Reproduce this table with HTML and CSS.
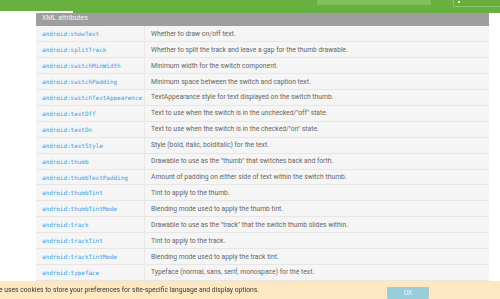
FILE: index.html
```html
<!DOCTYPE html>
<html>
<head>
<meta charset="utf-8">
<link rel="stylesheet" href="styles.css">
</head>
<body>
<header class="topbar">
  <div class="tab-underline"></div>
  <div class="search"></div>
  <div class="account"><span class="dot"></span></div>
</header>
<main class="content">
  <div class="attrs">
    <div class="attrs-head">XML attributes</div>
    <div class="row"><code class="name">android:showText</code><span class="desc">Whether to draw on/off text.</span></div>
    <div class="row"><code class="name">android:splitTrack</code><span class="desc">Whether to split the track and leave a gap for the thumb drawable.</span></div>
    <div class="row"><code class="name">android:switchMinWidth</code><span class="desc">Minimum width for the switch component.</span></div>
    <div class="row"><code class="name">android:switchPadding</code><span class="desc">Minimum space between the switch and caption text.</span></div>
    <div class="row"><code class="name">android:switchTextAppearence</code><span class="desc">TextAppearance style for text displayed on the switch thumb.</span></div>
    <div class="row"><code class="name">android:textOff</code><span class="desc">Text to use when the switch is in the unchecked/"off" state.</span></div>
    <div class="row"><code class="name">android:textOn</code><span class="desc">Text to use when the switch is in the checked/"on" state.</span></div>
    <div class="row"><code class="name">android:textStyle</code><span class="desc">Style (bold, italic, bolditalic) for the text.</span></div>
    <div class="row"><code class="name">android:thumb</code><span class="desc">Drawable to use as the "thumb" that switches back and forth.</span></div>
    <div class="row"><code class="name">android:thumbTextPadding</code><span class="desc">Amount of padding on either side of text within the switch thumb.</span></div>
    <div class="row"><code class="name">android:thumbTint</code><span class="desc">Tint to apply to the thumb.</span></div>
    <div class="row"><code class="name">android:thumbTintMode</code><span class="desc">Blending mode used to apply the thumb tint.</span></div>
    <div class="row"><code class="name">android:track</code><span class="desc">Drawable to use as the "track" that the switch thumb slides within.</span></div>
    <div class="row"><code class="name">android:trackTint</code><span class="desc">Tint to apply to the track.</span></div>
    <div class="row"><code class="name">android:trackTintMode</code><span class="desc">Blending mode used to apply the track tint.</span></div>
    <div class="row"><code class="name">android:typeface</code><span class="desc">Typeface (normal, sans, serif, monospace) for the text.</span></div>
  </div>
</main>
<div class="cookie">
  <span class="cookie-text">e uses cookies to store your preferences for site-specific language and display options.</span>
  <button class="ok">OK</button>
</div>
</body>
</html>
```
FILE: styles.css
```css
html, body {
  margin: 0;
  padding: 0;
  background: #ffffff;
  overflow: hidden;
}
body {
  width: 500px;
  height: 299px;
  font-family: Roboto, "Liberation Sans", sans-serif;
}
.topbar {
  height: 13px;
  background: #68b140;
  display: flex;
  align-items: flex-start;
}
.tab-underline {
  align-self: flex-end;
  width: 73px;
  height: 2px;
  background: #ffffff;
}
.search {
  margin-left: 244px;
  width: 114px;
  height: 5px;
  background: #7dc25a;
}
.account {
  margin-left: 22px;
  flex: 1;
  height: 6px;
  border-left: 1px solid #86c767;
  border-bottom: 1px solid #86c767;
  border-bottom-left-radius: 2px;
  background: #66af3e;
  position: relative;
}
.dot {
  position: absolute;
  left: 4px;
  top: 1px;
  width: 2px;
  height: 2px;
  background: #e9f5e2;
}
.content {
  padding-left: 36px;
}
.attrs {
  width: 453px;
  background: #f5f5f5;
}
.attrs-head {
  height: 13.4px;
  box-sizing: border-box;
  background: #9e9e9e;
  color: #f4f4f4;
  font-size: 7px;
  line-height: 11px;
  padding-left: 6px;
}
.row {
  display: grid;
  grid-template-columns: 109px 1fr;
  height: 15.92px;
  box-sizing: border-box;
  border-bottom: 1px solid #e6e6e6;
  align-items: center;
}
.name {
  font-family: "DejaVu Sans Mono", "Liberation Mono", monospace;
  font-size: 5.95px;
  color: #3a9de6;
  padding-left: 6px;
  height: 100%;
  display: flex;
  align-items: center;
  box-sizing: border-box;
  border-right: 1px solid #e9e9e9;
}
.desc {
  font-size: 6.75px;
  color: #666666;
  padding-left: 6px;
  white-space: nowrap;
}
.cookie {
  position: fixed;
  left: 0;
  right: 0;
  bottom: 0;
  height: 18px;
  background: #fde8c2;
  display: flex;
  align-items: center;
}
.cookie-text {
  margin-left: -1px;
  font-size: 6.75px;
  color: #3a3a3a;
  white-space: nowrap;
}
.ok {
  margin-left: auto;
  margin-right: 71px;
  margin-top: 5px;
  width: 42px;
  height: 12px;
  padding: 0;
  border: 0;
  border-radius: 1px;
  background: #98cdd9;
  color: #f2f7f8;
  font-family: Roboto, "Liberation Sans", sans-serif;
  font-size: 6.6px;
}
```
